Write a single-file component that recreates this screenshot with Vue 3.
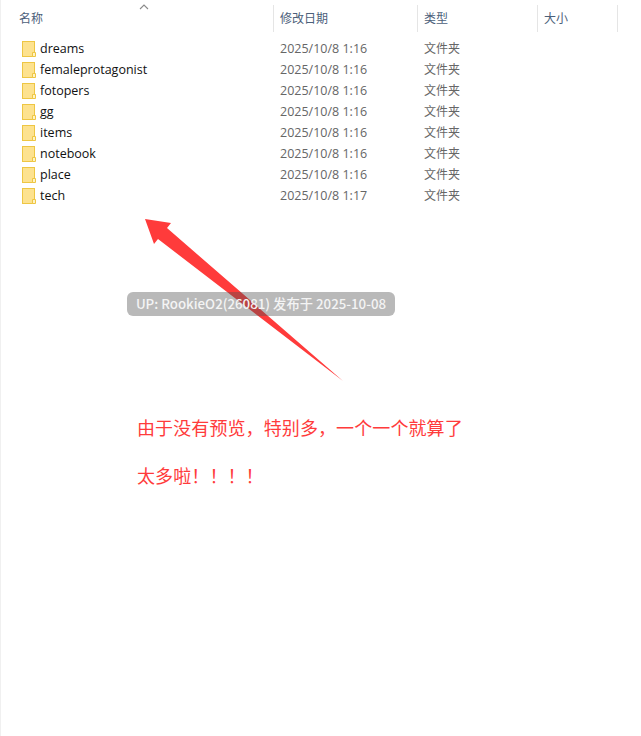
<script setup>
const columns = [
  { label: '名称', width: 273 },
  { label: '修改日期', width: 144 },
  { label: '类型', width: 120 },
  { label: '大小', width: 80 },
];
const folders = [
  { name: 'dreams', date: '2025/10/8 1:16' },
  { name: 'femaleprotagonist', date: '2025/10/8 1:16' },
  { name: 'fotopers', date: '2025/10/8 1:16' },
  { name: 'gg', date: '2025/10/8 1:16' },
  { name: 'items', date: '2025/10/8 1:16' },
  { name: 'notebook', date: '2025/10/8 1:16' },
  { name: 'place', date: '2025/10/8 1:16' },
  { name: 'tech', date: '2025/10/8 1:17' },
];
</script>

<template>
  <div class="page">
    <div class="header">
      <div v-for="col in columns" :key="col.label" class="head-cell" :style="{ width: col.width + 'px' }">
        {{ col.label }}
      </div>
    </div>
    <svg class="sort" width="10" height="6" viewBox="0 0 10 6" aria-hidden="true">
      <path d="M1 5 L5 1 L9 5" fill="none" stroke="#8a8a8a" stroke-width="1.1" />
    </svg>

    <div class="list">
      <div v-for="f in folders" :key="f.name" class="row">
        <div class="name-cell">
          <svg class="folder" width="14" height="16" viewBox="0 0 14 16" aria-hidden="true">
            <rect x="0.5" y="0.5" width="12" height="15" fill="#fde28f" stroke="#eec643" />
            <path d="M10.5 15.5 V11.5 H13.5 V15.5 Z" fill="#fff3c4" stroke="#eec643" />
          </svg>
          <span>{{ f.name }}</span>
        </div>
        <div class="date-cell">{{ f.date }}</div>
        <div class="type-cell">文件夹</div>
      </div>
    </div>

    <svg class="arrow" width="641" height="736" viewBox="0 0 641 736" aria-hidden="true">
      <polygon points="145,219 171,223 167,228 343,381 158,239 154,244" fill="#ff3b3b" />
    </svg>
    <div class="stamp">UP: RookieO2(26081) 发布于 2025-10-08</div>
    <div class="note note-1">由于没有预览，特别多，一个一个就算了</div>
    <div class="note note-2">太多啦！！！！</div>
  </div>
</template>

<style>
html, body { background: #fff; }
</style>

<style scoped>
.page {
  position: relative;
  width: 641px;
  height: 736px;
  overflow: hidden;
  box-sizing: border-box;
  border-left: 1px solid #f0f0f0;
  background: #fff;
  font-family: "Open Sans", "Noto Sans CJK SC", sans-serif;
}
.header {
  display: flex;
  height: 27px;
  margin-top: 5px;
}
.head-cell {
  box-sizing: border-box;
  border-right: 1px solid #e5e5e5;
  padding-left: 6px;
  font-size: 12px;
  line-height: 27px;
  color: #4c607a;
}
.head-cell:first-child { padding-left: 18px; }
.sort {
  position: absolute;
  left: 138px;
  top: 4px;
}
.list {
  margin-top: 6px;
}
.row {
  display: flex;
  height: 21px;
  align-items: center;
  font-size: 12.5px;
}
.name-cell {
  display: flex;
  align-items: center;
  gap: 4px;
  width: 272px;
  padding-left: 21px;
  box-sizing: border-box;
  color: #111;
}
.date-cell {
  width: 144px;
  padding-left: 7px;
  box-sizing: border-box;
  color: #666;
}
.type-cell {
  padding: 0 0 2px 7px;
  color: #666;
  font-size: 12px;
}
.arrow {
  position: absolute;
  left: -1px;
  top: 0;
}
.stamp {
  position: absolute;
  left: 126px;
  top: 292px;
  width: 268px;
  height: 24px;
  box-sizing: border-box;
  border-radius: 6px;
  background: rgba(80, 80, 80, 0.4);
  color: #f4f4f4;
  font-family: "Noto Sans CJK SC", sans-serif;
  font-size: 13.3px;
  font-weight: 500;
  line-height: 23px;
  text-align: center;
  white-space: nowrap;
}
.note {
  position: absolute;
  left: 136px;
  color: #ff3b3b;
  font-family: "Noto Sans CJK SC", sans-serif;
  font-size: 18px;
  letter-spacing: 0.1px;
  line-height: 24px;
  white-space: nowrap;
}
.note-1 { top: 415px; }
.note-2 { top: 463px; }
</style>
